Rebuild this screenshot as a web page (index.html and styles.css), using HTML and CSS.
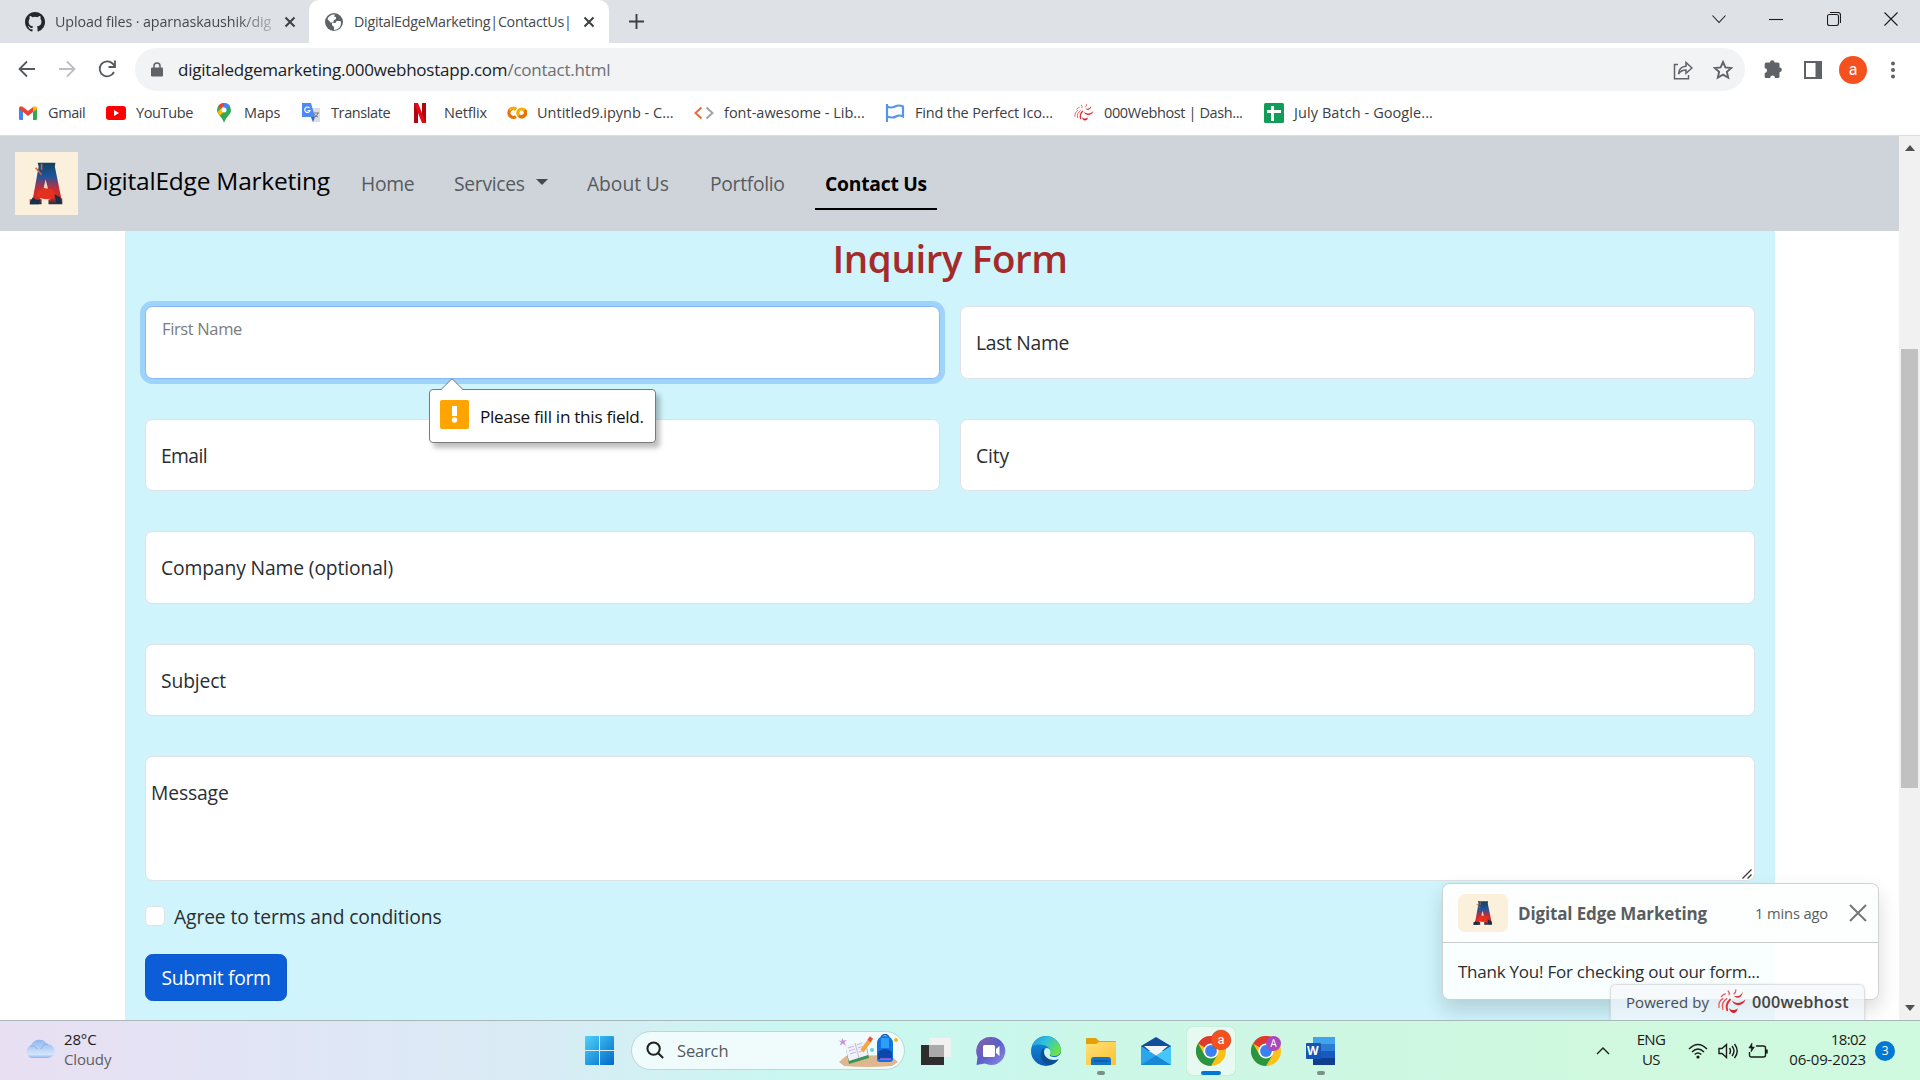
FILE: index.html
```html
<!DOCTYPE html>
<html lang="en">
<head>
<meta charset="utf-8">
<title>DigitalEdgeMarketing|ContactUs|</title>
<link rel="stylesheet" href="styles.css">
</head>
<body>
<svg class="defs" width="0" height="0" aria-hidden="true">
  <defs>
    <linearGradient id="letterFill" x1="0" y1="0" x2="0" y2="1">
      <stop offset="0" stop-color="#17405c"/><stop offset=".32" stop-color="#1a559b"/><stop offset=".52" stop-color="#8c3a5c"/><stop offset=".65" stop-color="#c92c30"/><stop offset=".85" stop-color="#d62a22"/><stop offset="1" stop-color="#16304a"/>
    </linearGradient>
    <linearGradient id="winFill" x1="0" y1="0" x2="1" y2="1"><stop offset="0" stop-color="#4fd2fb"/><stop offset="1" stop-color="#0067c8"/></linearGradient>
    <linearGradient id="chatFill" x1="0" y1="0" x2="1" y2="1"><stop offset="0" stop-color="#8b5fa8"/><stop offset=".5" stop-color="#5b5fc7"/><stop offset="1" stop-color="#8f8fe8"/></linearGradient>
    <linearGradient id="edgeTop" x1="0" y1="0" x2="1" y2=".5"><stop offset="0" stop-color="#2196e3"/><stop offset=".5" stop-color="#2fc3d8"/><stop offset="1" stop-color="#6be04a"/></linearGradient>
    <linearGradient id="edgeLow" x1="0" y1="0" x2="0" y2="1"><stop offset="0" stop-color="#1490df"/><stop offset="1" stop-color="#0a5cb8"/></linearGradient>
    <linearGradient id="folderFill" x1="0" y1="0" x2="1" y2="1"><stop offset="0" stop-color="#ffe07a"/><stop offset="1" stop-color="#fcc22f"/></linearGradient>
    <linearGradient id="cloudFill" x1="0" y1="0" x2="0" y2="1"><stop offset="0" stop-color="#8fb5ee"/><stop offset=".8" stop-color="#d3e5fb"/><stop offset="1" stop-color="#8db2f0"/></linearGradient>
    <symbol id="logoLetter" viewBox="0 0 64 64">
      <path fill="url(#letterFill)" d="M23 11h18l-.5 4 6.500 32h1v6H34v-5h2l-1-3h-9l-1 3h2v5H15v-5h3l6-33z"/>
      <path fill="#f6d9c2" d="M31 28l2.500 9h-4.500z"/>
      <path fill="#e4301f" d="M23 40l6-4 3 2 5-1 4 5-2 5-7 1-7-1-4-3z"/>
      <path fill="#16304a" d="M18 46l-3 7h9l2-5-4 1zM40 43l2 9h6l-2-6z"/>
      <path fill="none" stroke="#d5653a" stroke-width="1.600" d="M21 16l6 7M27 12v6"/>
    </symbol>
    <symbol id="chrome" viewBox="0 0 30 30">
      <circle cx="15" cy="15" r="15" fill="#fbc116"/>
      <path fill="#dd3a30" d="M15 15 2 7.500A15 15 0 0 1 28 7.500H15z"/>
      <path fill="#2a9441" d="M2 7.500A15 15 0 0 0 15 30l6.500-11.200L15 15 8.500 18.700z"/>
      <circle cx="15" cy="15" r="7.600" fill="#fff"/><circle cx="15" cy="15" r="5.900" fill="#3a80ee"/>
    </symbol>
    <symbol id="swirl" viewBox="0 0 30 26">
      <path fill="#d8222a" d="M12 20c3 3 7 2 9 0-1 7-8 6-9 0z"/>
      <path fill="#dc2b32" d="M15 12c4 4 9 3 14-1-2 7-12 8-14 1z"/>
      <path fill="#e03a40" d="M17 7c4 1 7 0 9-4 0 6-6 8-9 4z"/>
      <g fill="none" stroke-linecap="round">
        <path stroke="#de3036" stroke-width="2" d="M10 22q-2-6 3-11"/>
        <path stroke="#ea5b60" stroke-width="1.400" d="M5.500 21q-2-7 4-11M1.500 19q-1-6 4-9M17 5q2-1 2-4M12 6q1-2-1-4M4 8q1-2 4-3"/>
      </g>
    </symbol>
  </defs>
</svg>

<header class="tabs">
  <div class="tab tab-idle">
    <svg class="i20" viewBox="0 0 16 16" fill="#24292f"><path d="M8 0C3.580 0 0 3.580 0 8c0 3.540 2.290 6.530 5.470 7.590.4.070.550-.170.550-.380v-1.490c-2.010.370-2.530-.490-2.690-.940-.090-.230-.480-.940-.820-1.130-.280-.150-.680-.520-.010-.530.630-.010 1.080.580 1.230.820.720 1.210 1.870.870 2.330.660.070-.520.280-.870.510-1.070-1.780-.2-3.640-.890-3.640-3.950 0-.870.310-1.590.820-2.150-.080-.2-.360-1.020.080-2.120 0 0 .670-.210 2.200.820a7.600 7.600 0 0 1 4 0c1.530-1.040 2.200-.820 2.200-.820.440 1.100.160 1.920.080 2.120.510.560.820 1.270.820 2.150 0 3.070-1.870 3.750-3.650 3.950.290.250.540.730.540 1.480v2.200c0 .210.150.460.550.380A8 8 0 0 0 8 0z"/></svg>
    <span class="tab-title fade">Upload files · aparnaskaushik/dig</span>
    <svg class="tab-x" viewBox="0 0 12 12"><path d="M1.500 1.500l9 9m0-9l-9 9"/></svg>
  </div>
  <div class="tab tab-active">
    <svg class="i20" viewBox="0 0 20 20"><circle cx="10" cy="10" r="9" fill="#5f6368"/><path fill="#fff" d="M11 2.500c-3-.5-6 1-7.500 4.500l3 3.500h3v-2l2.500-1.500V5L10 4.500zM16.500 9h-4l-1 2H8v2l2 2v3c4 0 7-3 7-7z"/></svg>
    <span class="tab-title narrow">DigitalEdgeMarketing|ContactUs|</span>
    <svg class="tab-x" viewBox="0 0 12 12"><path d="M1.500 1.500l9 9m0-9l-9 9"/></svg>
  </div>
  <svg class="tab-plus" viewBox="0 0 16 16"><path d="M8 0v16M0 8h16"/></svg>
  <div class="win-buttons">
    <svg viewBox="0 0 14 14"><path d="M.5 3.500 7 10.500l6.500-7"/></svg>
    <svg viewBox="0 0 14 14"><path d="M0 7.500h14"/></svg>
    <svg viewBox="0 0 14 14"><rect x=".5" y="2.500" width="11" height="11" rx="2"/><path d="M3 .5h8q2.500 0 2.500 2.500v8"/></svg>
    <svg viewBox="0 0 14 14"><path d="M.5.5l13 13m0-13l-13 13"/></svg>
  </div>
</header>

<div class="toolbar">
  <svg class="nav-ico" viewBox="0 0 20 20"><path d="M18 10H3M10 2.500 2.500 10l7.500 7.500"/></svg>
  <svg class="nav-ico dim" viewBox="0 0 20 20"><path d="M2 10h15M10 2.500l7.500 7.500-7.500 7.500"/></svg>
  <svg class="nav-ico" viewBox="0 0 20 20"><path d="M17 13a7.500 7.500 0 1 1-1.500-8.500L18 7M18 1.500V8h-6.500"/></svg>
  <div class="omnibox">
    <svg class="lock" viewBox="0 0 12 14"><rect y="5" width="12" height="9" rx="1.200" fill="#5f6368"/><path d="M3 6V3.500a3 3 0 0 1 6 0V6" fill="none" stroke="#5f6368" stroke-width="1.500"/></svg>
    <span class="url">digitaledgemarketing.000webhostapp.com<em>/contact.html</em></span>
    <svg class="share" viewBox="0 0 20 20"><path d="M5 4.500H1.500v14.300h14V15M5.500 14c.3-5 3-7.500 7.500-7.800V2.500l6 5.500-6 5.300V10c-3.500 0-5.700 1-7.500 4z"/></svg>
    <svg class="star" viewBox="0 0 20 20"><path d="M10 2l2.400 5.400 5.900.6-4.400 3.900 1.300 5.800-5.200-3-5.200 3 1.300-5.800L1.700 8l5.900-.6z"/></svg>
  </div>
  <svg class="ext" viewBox="0 0 20 20" fill="#5f6368"><path d="M7 3.500a2.300 2.300 0 0 1 4.600 0H15A1.500 1.500 0 0 1 16.500 5v3.500a2.300 2.300 0 0 1 0 4.700v4.300a1.500 1.500 0 0 1-1.500 1.500h-3a2.400 2.400 0 0 0-4.800 0H3a1.300 1.300 0 0 1-1.300-1.300V14a2.400 2.400 0 0 0 0-4.800V5A1.500 1.500 0 0 1 3.200 3.500z"/></svg>
  <svg class="panel" viewBox="0 0 18 18"><rect x="1" y="1" width="16" height="16" fill="none" stroke="#5f6368" stroke-width="2"/><path fill="#5f6368" d="M11.500 0H18v18h-6.500z"/></svg>
  <span class="avatar">a</span>
  <svg class="dots" viewBox="0 0 4 18" fill="#5f6368"><circle cx="2" cy="2.500" r="2"/><circle cx="2" cy="9" r="2"/><circle cx="2" cy="15.500" r="2"/></svg>
</div>

<nav class="bookmarks">
  <a><svg viewBox="0 0 20 20"><path fill="#4285f4" d="M1 5l4 3v9H2q-1 0-1-1z"/><path fill="#34a853" d="M19 5l-4 3v9h3q1 0 1-1z"/><path fill="#ea4335" d="M1 5q1-3 4-1l5 4 5-4v5l-5 4-5-4-4-3z"/><path fill="#fbbc04" d="M15 4q3-2 4 1v1l-4 3z"/></svg><span class="tight">Gmail</span></a>
  <a><svg viewBox="0 0 20 20"><rect y="3" width="20" height="14" rx="3" fill="#f00"/><path fill="#fff" d="M8 7l5 3-5 3z"/></svg><span class="tight">YouTube</span></a>
  <a><svg viewBox="0 0 20 20"><path fill="#34a853" d="M3 7a7 7 0 0 1 14 0c0 5-5 6-7 13-2-7-7-8-7-13z"/><path fill="#4285f4" d="M10 0a7 7 0 0 1 6 3l-6 6z"/><path fill="#ea4335" d="M4.500 2.500A7 7 0 0 1 10 0v3L7 7z"/><path fill="#fbbc04" d="M3.500 9l6-6v6l-4 4z"/><circle cx="10" cy="7" r="2.500" fill="#fff"/></svg><span class="snug">Maps</span></a>
  <a><svg viewBox="0 0 20 20"><path fill="#dcdde0" d="M8 5h11v14h-8z"/><path fill="#4c8bf5" d="M1 0h9l4 14H1z"/><path fill="#3563c4" d="M10 14h4l-2 5z"/><path d="M8.500 5A2.700 2.700 0 1 0 9 7.500H6.500" fill="none" stroke="#fff" stroke-width="1.200"/><path d="M12.500 10H18m-1 0q-1 3-3 4m-1-3q1 2 4 3" fill="none" stroke="#6f7680"/></svg><span class="tight">Translate</span></a>
  <a><svg viewBox="0 0 20 20"><path fill="#b1060f" d="M0 0h4v20H0zM8 0h4v20H8z"/><path fill="#e50914" d="M0 0h4l8 20H8z"/></svg><span class="snug">Netflix</span></a>
  <a><svg viewBox="0 0 20 20" fill="none" stroke-width="3.200"><path stroke="#e8710a" d="M9 6.200a4.500 4.500 0 1 0 0 7.400"/><circle cx="14.800" cy="10" r="4" stroke="#f9ab00"/><path stroke="#e8710a" d="M12 12.800a4 4 0 0 0 5.600-5.600"/><path stroke="#f9ab00" d="M2.800 7.200a4.500 4.500 0 0 1 6-1"/></svg><span>Untitled9.ipynb - C...</span></a>
  <a><svg viewBox="0 0 20 20" fill="none" stroke-width="2.200"><path stroke="#e8703e" d="M7.500 4.500 1.500 10l6 5.500"/><path stroke="#a5a5a5" d="M12.500 4.500l6 5.500-6 5.500"/></svg><span>font-awesome - Lib...</span></a>
  <a><svg viewBox="0 0 20 20" fill="none" stroke="#5a94e6" stroke-width="2.200"><path d="M2 1v18M2 3.500q4 2 8 0t8 0v10q-4-2-7 0t-9 0"/></svg><span class="snug">Find the Perfect Ico...</span></a>
  <a><svg viewBox="0 0 20 20"><use href="#swirl" width="20" height="19"/></svg><span class="tight">000Webhost | Dash...</span></a>
  <a><svg viewBox="0 0 20 20"><rect width="20" height="20" rx="1.500" fill="#0f9d58"/><path stroke="#fff" stroke-width="3" d="M8.500 3v15M3 8.500h14"/></svg><span class="wide">July Batch - Google...</span></a>
</nav>

<div class="viewport">
  <main class="page">
    <nav class="navbar">
      <span class="logo"><svg viewBox="0 0 64 64"><use href="#logoLetter"/></svg></span>
      <span class="brand">DigitalEdge Marketing</span>
      <span class="link l1">Home</span>
      <span class="link l2">Services</span><i class="caret"></i>
      <span class="link l3">About Us</span>
      <span class="link l4">Portfolio</span>
      <span class="link current">Contact Us</span>
    </nav>
    <section class="form">
      <h1>Inquiry Form</h1>
      <div class="row">
        <div class="field focused"><span class="small">First Name</span></div>
        <div class="field"><span class="last">Last Name</span></div>
      </div>
      <div class="row">
        <div class="field low"><span class="email">Email</span></div>
        <div class="field low"><span>City</span></div>
      </div>
      <div class="row"><div class="field"><span>Company Name (optional)</span></div></div>
      <div class="row"><div class="field low"><span>Subject</span></div></div>
      <div class="row message"><div class="field area"><span>Message</span><svg viewBox="0 0 10 10"><path d="M.5 9.500l9-9M5.500 9.500l4-4"/></svg></div></div>
      <div class="agree"><i class="box"></i><span>Agree to terms and conditions</span></div>
      <button class="submit">Submit form</button>
    </section>

    <div class="bubble">
      <svg class="bubble-tip" viewBox="0 0 22 12"><path fill="#fff" d="M0 12 11 .7 22 12z"/><path fill="none" stroke="#777b7e" d="M0 11.500 11 .7l11 10.800"/></svg>
      <svg class="warn" viewBox="0 0 29 29"><rect width="29" height="29" rx="2" fill="#ffa400"/><path fill="#fff" d="M12 6h5v10h-5z"/><circle cx="14.500" cy="20" r="2.700" fill="#fff"/></svg>
      <span>Please fill in this field.</span>
    </div>

    <div class="toast">
      <div class="toast-head">
        <span class="thumb"><svg viewBox="0 0 64 64"><use href="#logoLetter"/></svg></span>
        <strong>Digital Edge Marketing</strong>
        <small>1 mins ago</small>
        <svg class="toast-x" viewBox="0 0 18 18"><path d="M1 1l16 16M17 1 1 17"/></svg>
      </div>
      <div class="toast-body">Thank You! For checking out our form...</div>
    </div>
    <div class="powered"><span>Powered by</span><svg viewBox="0 0 30 26"><use href="#swirl"/></svg><b>000webhost</b></div>
  </main>
  <aside class="scrollbar">
    <svg viewBox="0 0 10 6"><path d="M5 0l5 6H0z"/></svg>
    <div class="track"><i></i></div>
    <svg viewBox="0 0 10 6"><path d="M0 0h10L5 6z"/></svg>
  </aside>
</div>

<footer class="taskbar">
  <div class="weather">
    <svg viewBox="0 0 30 20"><path fill="url(#cloudFill)" d="M7 20a6.500 6.500 0 0 1-1-12.500A9 9 0 0 1 22 6a7 7 0 0 1 1 14z"/><path fill="none" stroke="#7fa4e6" stroke-width=".8" d="M5 8q5-1 7 3M16 11q2-5 7-5"/></svg>
    <div><span>28°C</span><span class="mute">Cloudy</span></div>
  </div>
  <svg class="start" viewBox="0 0 29 29" fill="url(#winFill)"><path d="M1 0h13v14H0V1q0-1 1-1zM15 0h13q1 0 1 1v13H15zM0 15h14v14H1q-1 0-1-1zM15 15h14v13q0 1-1 1H15z"/></svg>
  <div class="search">
    <svg class="glass" viewBox="0 0 20 20"><circle cx="8" cy="8" r="6.500"/><path d="M12.700 12.700l5.300 5.300"/></svg>
    <span>Search</span>
    <svg class="school" viewBox="0 0 60 34">
      <path fill="#deb791" d="M8 22l44-1 8 7-6 4q-24 2-48 0l-5-4z"/>
      <path fill="#cd8ee8" d="M4 4l1.500 2.500L9 6 6.500 8 8 12 5 9.500 2 11.500 3 8 0 6.500 3.500 7z"/>
      <path fill="#3d9457" d="M8 15l20-6 3 15-20 6z"/><path fill="#f2f0fb" d="M7 12l11-3 9-2 3 14-19 6z"/><path stroke="#aaa6c8" fill="none" stroke-width=".7" d="M17 9l4 15M10 14l6-2M11 17l6-2M12 20l6-2M19 11l5-2M20 14l6-2M21 18l6-2"/>
      <path stroke="#f7a63c" stroke-width="4" d="M24 17l8-11"/><path stroke="#ea5549" stroke-width="4" d="M31 7l2.500-3.500"/>
      <circle cx="34" cy="16" r="2" fill="#63d2df"/><circle cx="58" cy="6" r="2" fill="#f9b60d"/>
      <path fill="none" stroke="#144caf" stroke-width="1.500" d="M43 3q4-5 8 0"/><path fill="#1272e0" d="M39 10q0-8 8-8t8 8v15q0 3-3 3H42q-3 0-3-3z"/><path fill="#2ca0f8" d="M43 4h8v10h-8z"/><path fill="#0c48a8" d="M40 18q7-6 14 0v7H40z"/><path stroke="#b063f0" stroke-width="1.500" d="M42 25h11"/>
    </svg>
  </div>
  <div class="apps">
    <span class="app"><svg viewBox="0 0 30 30"><path fill="#2d2d2d" d="M0 9h23v20H0z"/><path fill="#f1f1f1" d="M8 2h22v19H8z"/><path fill="#aaa" d="M8 9h15v12H8z"/></svg></span>
    <span class="app"><svg viewBox="0 0 30 30"><path fill="url(#chatFill)" d="M15 1a14 14 0 1 1-6 26.500L.5 29l1-8A14 14 0 0 1 15 1z"/><rect x="7" y="9" width="12" height="12" rx="1.500" fill="#fff"/><path fill="#fff" d="M20 13l3.500-3v10L20 17z"/></svg></span>
    <span class="app"><svg viewBox="0 0 30 30"><circle cx="15" cy="15" r="15" fill="url(#edgeLow)"/><path fill="url(#edgeTop)" d="M1 10A15 15 0 0 1 30 14c0 4-3 6-7 6-3 0-5-1-4-3 2-7-9-11-18-7z"/><path fill="#0d4f93" d="M13 12c-6 4-4 16 6 17 4-1 7-3 9-7-7 3-16-1-15-10z"/><path fill="#c9f6ef" d="M15 12c4 0 5 3 4 6-1 2 1 3 5 3 2 0 5-2 6-4v4l-2 2c-7 3-15-1-15-7 0-2 1-3 2-4z"/></svg></span>
    <span class="app"><svg viewBox="0 0 30 30"><path fill="#e3a008" d="M0 3q0-1 1-1h9l3 3h16q1 0 1 1v5H0z"/><path fill="url(#folderFill)" d="M0 8h10l3-2h17v23H0z"/><path fill="#1173c9" d="M5 29v-5q0-3 3-3h14q3 0 3 3v5z"/><path stroke="#0a4d91" d="M8 25h14"/></svg><i class="dash"></i></span>
    <span class="app"><svg viewBox="0 0 30 30"><path fill="#0f4f9c" d="M0 10 15 1l15 9v5H0z"/><path fill="#f3f4f6" d="M3 10h24l-12 10z"/><path fill="#2aa6ec" d="M0 10l30 19H0z"/><path fill="#45c6f7" d="M30 10 15 19.500 30 29z"/><path fill="#1787d6" d="M0 29l15-9.500L30 29z"/></svg></span>
    <span class="app on"><svg viewBox="0 0 30 30"><use href="#chrome"/></svg><b class="badge big">a</b><i class="dash"></i></span>
    <span class="app"><svg viewBox="0 0 30 30"><use href="#chrome"/></svg><b class="badge">A</b></span>
    <span class="app word"><svg viewBox="0 0 30 30"><path fill="#41a5ee" d="M7 1h22v7H7z"/><path fill="#2b7cd3" d="M7 8h22v7H7z"/><path fill="#185abd" d="M7 15h22v7H7z"/><path fill="#103f91" d="M7 22h22v7H7z"/><rect y="7" width="15" height="16" rx="1" fill="#1655b5"/></svg><b>W</b><i class="dash"></i></span>
  </div>
  <div class="tray">
    <svg class="up" viewBox="0 0 14 8"><path d="M1 7l6-6 6 6"/></svg>
    <div class="lang"><span>ENG</span><span>US</span></div>
    <svg class="sys" viewBox="0 0 20 16"><path d="M1 6q9-9 18 0M4 9q6-6 12 0M6.700 11.500q3.300-3 6.600 0"/><circle cx="10" cy="14" r="1.600" fill="#1b1b1b" stroke="none"/></svg>
    <svg class="sys" viewBox="0 0 20 16"><path d="M1 5.500h3l4.500-4v13L4 10.500H1zM11.500 5q2 3 0 6M14 3q4 5 0 10M16.500 1q5.500 7 0 14"/></svg>
    <svg class="sys" viewBox="0 0 20 16"><path d="M8 3h7.500q2 0 2 2v7q0 2-2 2h-12q-2 0-2-2V9"/><path stroke-width="2.500" d="M18.500 6.500v4"/><path fill="#1b1b1b" d="M4 0 .8 5h2.500L3 9l3.500-5H4z" stroke-width=".5"/></svg>
    <div class="clock"><span class="time">18:02</span><span>06-09-2023</span></div>
    <span class="count">3</span>
  </div>
</footer>
</body>
</html>
```
FILE: styles.css
```css
* { box-sizing: border-box; }
body { margin: 0; width: 1920px; height: 1080px; overflow: hidden; display: flex; flex-direction: column; font-family: "Open Sans", "Noto Sans", sans-serif; color: #2a2e32; background: #fff; }
svg { display: block; flex: none; }
span, strong, small, b { white-space: nowrap; }
.defs { position: absolute; }

/* tab strip */
.tabs { display: flex; align-items: center; height: 43px; background: #dee1e6; flex: none; }
.tab { display: flex; align-items: center; height: 43px; font-size: 14.300px; color: #45494d; }
.tab-idle { width: 309px; padding-left: 25px; }
.tab-active { width: 300px; padding-left: 15px; background: #fff; border-radius: 10px 10px 0 0; }
.i20 { width: 20px; height: 20px; margin-right: 10px; }
.tab-title { width: 219px; margin-top: -1px; letter-spacing: -.12px; }
.narrow { letter-spacing: -.28px; }
.fade { -webkit-mask-image: linear-gradient(90deg, #000 82%, rgba(0,0,0,.25)); mask-image: linear-gradient(90deg, #000 82%, rgba(0,0,0,.25)); }
.tab-x { width: 12px; height: 12px; margin-left: 10px; stroke: #3c4043; stroke-width: 2; }
.tab-plus { width: 15px; height: 15px; margin-left: 20px; stroke: #3c4043; stroke-width: 2; }
.win-buttons { display: flex; gap: 43.300px; margin: -5px 22px 0 auto; }
.win-buttons svg { width: 14px; height: 14px; fill: none; stroke: #1b1b1b; stroke-width: 1.100; }

/* toolbar */
.toolbar { display: flex; align-items: center; height: 48px; padding: 5px 25px 0 17px; flex: none; }
.nav-ico { width: 20px; height: 20px; margin: -2px 20px 0 0; fill: none; stroke: #55595d; stroke-width: 1.800; }
.nav-ico.dim { stroke: #bcbec1; }
.omnibox { display: flex; align-items: center; width: 1610px; height: 43px; margin-left: -2px; padding: 0 12px 0 16px; border-radius: 22px; background: #f1f3f4; }
.lock { width: 12px; height: 15px; margin-right: 15px; }
.url { font-size: 17px; letter-spacing: -.22px; color: #202124; }
.url em { font-style: normal; color: #6b6f73; }
.share, .star { width: 20px; height: 20px; fill: none; stroke: #5f6368; stroke-width: 1.500; }
.share { margin-left: auto; margin-right: 20px; }
.star { stroke-width: 1.900; }
.ext { width: 20px; height: 20px; margin: -2px 0 0 18px; }
.panel { width: 18px; height: 18px; margin-left: 21px; }
.avatar { width: 28px; height: 28px; margin-left: 17px; border-radius: 50%; background: #f4511e; color: #fff; font: 16px/27px Roboto, sans-serif; text-align: center; }
.dots { width: 4px; height: 18px; margin-left: 24px; }

/* bookmarks */
.bookmarks { display: grid; grid-template-columns: 88px 108px 87px 113px 93px 187px 191px 189px 190px auto; align-items: center; height: 45px; padding: 0 0 1px 18px; border-bottom: 1px solid #dadce0; font-size: 14.500px; color: #3c4043; flex: none; }
.bookmarks a { display: flex; align-items: center; gap: 10px; }
.bookmarks svg { width: 20px; height: 20px; }
.snug { letter-spacing: -.16px; }
.tight { letter-spacing: -.39px; }
.wide { letter-spacing: .08px; }

/* web page */
.viewport { display: flex; height: 884px; flex: none; }
.page { position: relative; width: 1899px; overflow: hidden; font-size: 19.300px; letter-spacing: -.13px; }
.navbar { display: flex; align-items: center; height: 95px; padding-left: 15px; background: #ced4da; }
.logo { width: 63px; height: 63px; background: #fbf0dc; }
.brand { width: 245px; margin: -7px 31px 0 7px; font-size: 24.500px; letter-spacing: -.22px; color: #000; }
.link { color: #565b60; letter-spacing: -.3px; }
.l1 { width: 53px; margin-right: 40px; }
.l2 { width: 70px; }
.caret { margin: -4px 39px 0 12px; border: 6px solid transparent; border-top-color: #45494d; border-bottom: 0; }
.l3 { width: 82px; margin-right: 41px; letter-spacing: -.07px; }
.l4 { width: 75px; margin-right: 30px; }
.current { width: 122px; height: 52px; margin-top: 1px; padding: 12px 0 0 10px; border-bottom: 2px solid #000; color: #000; font-weight: 700; letter-spacing: -.24px; }
.form { width: 1650px; height: 789px; margin-left: 125px; padding: 0 20px; background: #cff4fc; }
h1 { height: 75px; margin: 0; font-size: 38.500px; line-height: 55px; font-weight: 600; letter-spacing: -.4px; text-align: center; color: #a52a2a; }
.row { display: flex; gap: 20px; margin-bottom: 40px; }
.field { display: flex; align-items: center; flex: 1; height: 72.500px; padding-left: 15px; background: #fff; border: 1px solid #dee2e6; border-radius: 7.500px; }
.low { padding-top: 2px; }
.last { letter-spacing: -.31px; }
.email { letter-spacing: -.6px; }
.focused { border-color: #86b7fe; box-shadow: 0 0 0 5px rgba(13,110,253,.25); }
.small { margin: -28px 0 0 1px; font-size: 16.500px; letter-spacing: -.36px; color: #7a7d80; }
.area { align-items: flex-start; justify-content: space-between; height: 125px; padding: 22px 2px 0 5px; }
.area svg { width: 10px; height: 10px; margin-top: 90px; stroke: #333; fill: none; stroke-width: 1.200; }
.message { margin-bottom: 25px; }
.agree { display: flex; align-items: center; height: 20px; }
.box { width: 20px; height: 20px; margin-right: 9px; background: #fff; border: 1px solid #dee2e6; border-radius: 5px; }
.submit { display: block; width: 142px; height: 47px; margin-top: 28px; padding: 0; border: 1px solid #0a58ca; border-radius: 7.500px; background: #0b5ed7; color: #fff; font: 19.300px "Open Sans", sans-serif; letter-spacing: -.33px; }

.bubble { position: absolute; left: 429px; top: 253px; width: 227px; height: 54px; display: flex; align-items: center; padding: 0 10px; background: #fff; border: 1px solid #777b7e; border-radius: 4px; box-shadow: 4px 5px 5px rgba(0,0,0,.25); font-size: 17.200px; letter-spacing: -.3px; color: #111; }
.bubble-tip { position: absolute; left: 11px; top: -12px; width: 22px; height: 12px; }
.warn { width: 29px; height: 29px; margin: -4px 11px 0 0; }

.toast { position: absolute; left: 1442px; top: 747px; width: 437px; height: 117px; border: 1px solid rgba(0,0,0,.176); border-radius: 7.500px; background: rgba(255,255,255,.88); box-shadow: 0 10px 20px rgba(0,0,0,.15); font-size: 17px; }
.toast-head { display: flex; align-items: center; height: 59px; padding-left: 15px; border-bottom: 1px solid #c9ccce; background: #fdfefe; border-radius: 7px 7px 0 0; color: #595d61; }
.thumb { width: 50px; height: 38px; padding-left: 7px; margin-right: 10px; border-radius: 7px; background: #fbf0dc; }
.thumb svg { width: 36px; height: 38px; }
.toast strong { width: 237px; letter-spacing: -.14px; }
.toast small { width: 75px; font-size: 14.700px; }
.toast-x { width: 18px; height: 18px; margin-left: 19px; stroke: #777; stroke-width: 2; }
.toast-body { padding: 17px 15px; letter-spacing: -.24px; }
.powered { position: absolute; left: 1610px; top: 848px; width: 255px; height: 37px; display: flex; align-items: center; padding: 0 0 2px 15px; background: rgba(244,248,252,.72); border: 1px solid rgba(0,0,0,.1); border-radius: 6px 6px 0 0; font-size: 15px; letter-spacing: .06px; color: #4a4d50; box-shadow: 0 0 3px rgba(0,0,0,.1); }
.powered svg { width: 30px; height: 25px; margin: 0 5px 0 8px; }
.powered b { font-weight: 600; font-size: 16.200px; letter-spacing: .2px; color: #444; }

.scrollbar { display: flex; flex-direction: column; align-items: center; width: 21px; padding: 9px 0; background: #f1f1f1; }
.scrollbar svg { width: 10px; height: 6px; fill: #505050; }
.track { flex: 1; padding-top: 198px; }
.track i { display: block; width: 17px; height: 439px; background: #c1c1c1; }

/* taskbar */
.taskbar { display: flex; align-items: center; height: 60px; border-top: 1px solid #a9b9ba; background: linear-gradient(90deg, #e8dff2 0, #e1e5f6 270px, #d9ebf5 530px, #caf7f1 780px, #caf7ee 950px, #cdf7e5 1200px, #cff8e0 1500px, #d0fadf 1920px); font-size: 15px; color: #1b1b1b; letter-spacing: -.15px; }
.weather { display: flex; align-items: center; gap: 9px; width: 560px; padding-left: 25px; }
.weather svg { width: 30px; height: 20px; margin-top: -6px; }
.weather div, .lang, .clock { display: flex; flex-direction: column; line-height: 20px; margin-top: -4px; }
.mute { color: #5b5f63; }
.start { width: 29px; height: 29px; margin-left: 25px; }
.search { display: flex; align-items: center; width: 274px; height: 39px; margin-left: 17px; padding: 0 6px 0 14px; border: 1px solid #b7d8d9; border-radius: 20px; background: #f0fcfb; font-size: 16.500px; color: #54595b; }
.glass { width: 19px; height: 19px; margin-right: 12px; fill: none; stroke: #222; stroke-width: 2.200; }
.school { width: 60px; height: 34px; margin-left: auto; }
.apps { display: flex; gap: 7px; margin-left: 7px; }
.app { position: relative; width: 48px; height: 48px; padding: 9px; border-radius: 5px; }
.app svg { width: 30px; height: 30px; }
.on { background: #e6faf2; box-shadow: 0 0 1px #98b5a9; }
.dash { position: absolute; left: 20px; bottom: 0; width: 8px; height: 4px; border-radius: 2px; background: #7a8f86; }
.on .dash { left: 14px; width: 20px; background: #0078d4; }
.badge { position: absolute; left: 24px; top: 9px; width: 15px; height: 15px; border-radius: 50%; background: #ab47bc; color: #fff; font: 10px/15px Roboto, sans-serif; text-align: center; }
.big { top: 3px; width: 20px; height: 20px; background: #f4511e; font-size: 13px; line-height: 19px; box-shadow: 0 0 1px #555; }
.word b { position: absolute; left: 10px; top: 15px; color: #fff; font: 700 12px/17px "Open Sans", sans-serif; }
.tray { display: flex; align-items: center; margin-left: auto; padding-right: 25px; }
.tray svg { fill: none; stroke: #1b1b1b; stroke-width: 1.400; }
.up { width: 14px; height: 8px; margin-right: 26px; }
.lang { width: 30px; margin-right: 22px; align-items: center; letter-spacing: -.6px; }
.sys { width: 20px; height: 16px; margin-right: 10px; }
.clock { width: 88px; align-items: flex-end; margin-right: 9px; }
.time { letter-spacing: -.6px; }
.count { width: 20px; height: 20px; border-radius: 50%; background: #0078d4; color: #fff; font-size: 12px; line-height: 20px; text-align: center; }
```
